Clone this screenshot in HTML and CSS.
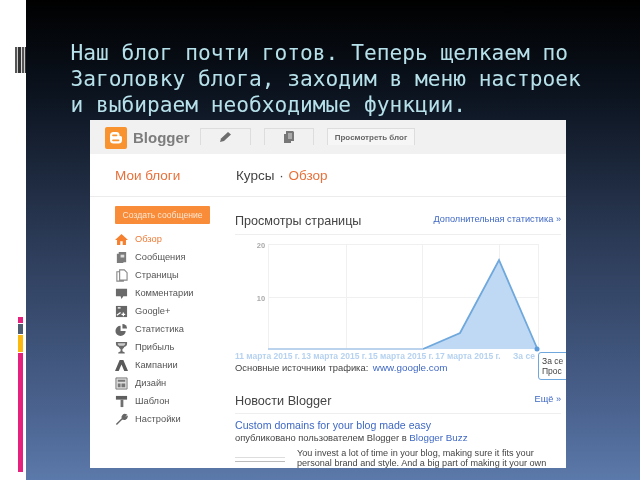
FILE: index.html
```html
<!DOCTYPE html>
<html lang="ru">
<head>
<meta charset="utf-8">
<title>Blogger</title>
<link rel="stylesheet" href="styles.css">
</head>
<body>
<div class="page">
  <aside class="strip">
    <div class="mark-grey"></div>
    <div class="marks">
      <i class="mark m1"></i><i class="mark m2"></i><i class="mark m3"></i><i class="mark m4"></i>
    </div>
  </aside>
  <main class="slide">
    <h1 class="title">Наш блог почти готов. Теперь щелкаем по<br>Заголовку блога, заходим в меню настроек<br>и выбираем необходимые функции.</h1>
    <section class="shot">
      <header class="bar">
        <svg class="logo" viewBox="0 0 22 22"><rect width="22" height="22" rx="2" fill="#f8932f"/><path d="M5 8.5a3.5 3.5 0 0 1 3.5-3.5h3a3 3 0 0 1 3 3v1h1a1.5 1.5 0 0 1 1.500 1.500v2.500a3.500 3.500 0 0 1-3.500 3.500h-5a3.500 3.500 0 0 1-3.500-3.500z" fill="#fff"/><path d="M8 8.300h3.500M8 13.300h5.500" stroke="#f8932f" stroke-width="1.800" stroke-linecap="round"/></svg>
        <span class="brand">Blogger</span>
        <span class="tab tab-a"><svg class="tab-icon" viewBox="0 0 14 14"><path d="M1 12l1-3.500 7-6.500 3 2.500-7 6.500z" fill="#6d6d6d"/></svg></span>
        <span class="tab tab-b"><svg class="tab-icon" viewBox="0 0 14 14"><path d="M4 1h7l1 1v9H9v2H2V4h2z" fill="#777"/><path d="M6 4h4M6 6h4M6 8h4" stroke="#ddd"/></svg></span>
        <span class="tab tab-c">Просмотреть блог</span>
      </header>
      <div class="crumbs">
        <span class="myblogs">Мои блоги</span>
        <span class="path">Курсы <span class="dot">·</span> <b>Обзор</b></span>
      </div>
      <div class="content">
        <nav class="side">
          <div class="create">Создать сообщение</div>
          <ul class="menu">
            <li class="active"><svg viewBox="0 0 14 14"><path d="M7 1L0 7.500h2.200V13h3.500V9h2.600v4h3.500V7.500H14z" fill="#f5802f"/></svg>Обзор</li>
            <li><svg viewBox="0 0 14 14"><path d="M4 1h8v11H9v1H2V3h2z" fill="#7b7b7b"/><path d="M6 4h4v3H6z" fill="#ddd"/></svg>Сообщения</li>
            <li><svg viewBox="0 0 14 14"><path d="M5 1h5l3 3v8H5zM5 3H2v10h7v-1" fill="none" stroke="#888" stroke-width="1.200"/></svg>Страницы</li>
            <li><svg viewBox="0 0 14 14"><path d="M1 2h12v8H9l-2 3-1-3H1z" fill="#6a6a6a"/></svg>Комментарии</li>
            <li><svg viewBox="0 0 14 14"><path d="M1 1h12v12H1z" fill="#666"/><path d="M3 3h3M9 8v4M7 10h4M2 11l4-3" stroke="#fff" stroke-width="1.300"/></svg>Google+</li>
            <li><svg viewBox="0 0 14 14"><path d="M6 3a5.500 5.500 0 1 0 5.500 5.500H6z" fill="#666"/><path d="M8 1a5 5 0 0 1 5 5H8z" fill="#666"/></svg>Статистика</li>
            <li><svg viewBox="0 0 14 14"><path d="M1 1h12v2c0 2-1.500 3-3 3.500C9.500 8 8 8.500 8 9v2l2.500 1.500v1h-7v-1L6 11V9c0-.5-1.500-1-2-2.500C2.500 6 1 5 1 3z" fill="#6a6a6a"/><path d="M3 2.500h8v.5c0 1-1 1.800-1.500 2h-5C4 4.800 3 4 3 3z" fill="#ccc"/></svg>Прибыль</li>
            <li><svg viewBox="0 0 14 14"><path d="M5 1h4l5 12h-4L7 6l-3 7H0z" fill="#5a5a5a"/></svg>Кампании</li>
            <li><svg viewBox="0 0 14 14"><path d="M1 1h12v12H1z" fill="#ddd" stroke="#777"/><path d="M3 3h8v2H3zM7 7h4v4H7zM3 7h3v4H3z" fill="#777"/></svg>Дизайн</li>
            <li><svg viewBox="0 0 14 14"><path d="M1 1h12v4H1z" fill="#5f5f5f"/><path d="M6 5h3v8H6z" fill="#6f6f6f"/></svg>Шаблон</li>
            <li><svg viewBox="0 0 14 14"><path d="M1.500 12.500L8 6M8 6a3 3 0 0 1 4-4L10 4l1 1 2-1a3 3 0 0 1-5 2z" fill="#666" stroke="#666" stroke-width="1.500"/></svg>Настройки</li>
          </ul>
        </nav>
        <div class="main">
          <div class="head head-views">
            <h2>Просмотры страницы</h2>
            <a>Дополнительная статистика »</a>
          </div>
          <div class="chart">
            <svg viewBox="0 0 330 116" width="330" height="116">
              <g stroke="#f0f0f0" fill="none">
                <path d="M33 2.500H304M33 55.500H304"/>
                <path d="M33.500 2V107M111.500 2V107M187.500 2V107M264.500 2V107M303.500 2V107"/>
              </g>
              <path d="M33 107H188L225 91 264 18 302 107Z" fill="#bfd8f3"/>
              <path d="M188 107L225 91 264 18 302 106" fill="none" stroke="#6fa8dc" stroke-width="1.800"/>
              <path d="M33 107H188" fill="none" stroke="#bcd3ee" stroke-width="2"/>
              <circle cx="302" cy="107" r="2.500" fill="#5c9bdc"/>
              <text x="26" y="6" class="tick" text-anchor="middle">20</text>
              <text x="26" y="59" class="tick" text-anchor="middle">10</text>
            </svg>
            <div class="tip">За се<br>Прос</div>
          </div>
          <div class="dates"><span>11 марта 2015 г.</span><span>13 марта 2015 г.</span><span>15 марта 2015 г.</span><span>17 марта 2015 г.</span><span class="last">За се</span></div>
          <p class="source">Основные источники трафика: <a>www.google.com</a></p>
          <div class="head head-news">
            <h2>Новости Blogger</h2>
            <a>Ещё »</a>
          </div>
          <a class="post">Custom domains for your blog made easy</a>
          <p class="byline">опубликовано пользователем Blogger в <a>Blogger Buzz</a></p>
          <div class="article">
            <div class="thumb"></div>
            <p>You invest a lot of time in your blog, making sure it fits your personal brand and style. And a big part of making it your own</p>
          </div>
        </div>
      </div>
    </section>
  </main>
</div>
</body>
</html>
```
FILE: styles.css
```css
* { box-sizing: border-box; }
html, body { margin: 0; height: 100%; overflow: hidden; }
body { background: #fff; font-family: "Liberation Sans", Arial, sans-serif; }
.page { display: flex; width: 640px; height: 480px; }
.strip { position: relative; width: 25.500px; flex: none; background: #fff; }
.mark-grey {
  position: absolute; left: 15px; top: 47px; width: 10.500px; height: 26px;
  background: repeating-linear-gradient(90deg, #555 0 2px, #ccc 2px 3px, #333 3px 6px, #ddd 6px 7px);
  filter: blur(.4px);
}
.marks { position: absolute; left: 18px; top: 317px; width: 5px; display: flex; flex-direction: column; gap: 1px; }
.mark { display: block; }
.m1 { height: 6px; background: #e5207d; }
.m2 { height: 10px; background: #4d5d72; }
.m3 { height: 17px; background: #fbb80f; }
.m4 { height: 119px; background: #e5207d; }
.slide {
  flex: 1; height: 480px; padding: 40px 0 0 45px;
  background: linear-gradient(180deg, #000 0%, #0c1420 20%, #2b3a56 50%, #4a628e 85%, #5b79aa 100%);
}
.title {
  margin: 0; width: 560px; height: 80px; white-space: nowrap;
  font: normal 21.200px/26px "DejaVu Sans Mono", monospace; color: #b7e1ea;
  filter: blur(.3px);
}
.shot {
  width: 476px; height: 348px; margin-left: 19.500px; overflow: hidden;
  background: #fff; filter: blur(.45px);
  display: flex; flex-direction: column;
}
.bar { display: flex; align-items: flex-start; height: 34px; flex: none; padding: 7px 0 0 15px; background: #f1f1f1; }
.logo { width: 22px; height: 22px; flex: none; }
.brand { width: 67px; margin-left: 6px; font-size: 15px; line-height: 21px; font-weight: bold; color: #7d7d7d; }
.tab { display: flex; align-items: center; justify-content: center; height: 17px; margin-top: 1px; border: 1px solid #ddd; border-bottom: 0; }
.tab-a { width: 51px; }
.tab-b { width: 50px; margin-left: 13px; }
.tab-c { width: 88px; margin-left: 13px; font-size: 8px; font-weight: bold; color: #666; background: #f6f6f6; }
.tab-icon { width: 14px; height: 14px; }
.crumbs { display: flex; align-items: center; height: 43px; flex: none; padding-left: 25px; border-bottom: 1px solid #ececec; }
.myblogs { width: 121px; font-size: 13.500px; color: #e8703a; }
.path { font-size: 13.500px; color: #444; }
.path b { font-weight: normal; color: #e8703a; }
.dot { margin: 0 1px; }
.content { display: flex; flex: 1; min-height: 0; }
.side { width: 145px; flex: none; padding: 9px 0 0 25px; }
.create {
  width: 95px; height: 18px; border-radius: 1px; background: #f98c38; color: #fde6d2;
  font-size: 8.600px; line-height: 18px; text-align: center;
}
.menu { list-style: none; margin: 6px 0 0; padding: 0; }
.menu li { display: flex; align-items: center; gap: 7px; height: 18px; font-size: 9.300px; color: #555; }
.menu svg { width: 13px; height: 13px; flex: none; }
.menu .active { color: #ee7b36; }
.main { width: 326px; flex: none; }
.head { display: flex; justify-content: space-between; align-items: center; border-bottom: 1px solid #eee; }
.head h2 { margin: 0; font-weight: normal; color: #444; }
.head a { margin-bottom: 4px; font-size: 9.200px; color: #3f68c4; }
.head-views { height: 26px; margin-top: 12px; padding-bottom: 2px; }
.head-views h2 { font-size: 12.600px; }
.chart { position: relative; height: 115px; margin-top: 7px; }
.chart svg { display: block; }
.tick { font: bold 7.500px "Liberation Sans", sans-serif; fill: #aaa; }
.tip {
  position: absolute; left: 303px; top: 110px; width: 40px; height: 28px; padding: 3px 0 0 3px;
  border: 1px solid #6fa8dc; border-radius: 3px; background: #fff;
  font-size: 8.500px; line-height: 10px; color: #444; white-space: nowrap;
}
.dates { display: flex; gap: 1.500px; height: 8px; margin-top: -6px; font-size: 8.500px; line-height: 10px; font-weight: bold; color: #b6d2f0; white-space: nowrap; }
.last { margin-left: 11px; }
.source { margin: 3px 0 0; font-size: 9.400px; line-height: 12px; color: #444; }
.source a { margin-left: 2px; font-size: 9.900px; color: #3f68c4; }
.head-news { height: 26px; margin-top: 14px; padding-bottom: 0; }
.head-news h2 { font-size: 12.700px; }
.post { display: block; margin-top: 4px; font-size: 10.600px; line-height: 14px; color: #3f68c4; }
.byline { margin: 0; font-size: 9.400px; line-height: 12px; color: #444; }
.byline a { color: #3f68c4; font-size: 9.800px; }
.article { display: flex; margin-top: 4px; }
.thumb { width: 62px; height: 18px; flex: none; margin-top: 6px; background: linear-gradient(#fff 0 3px, #ddd 3px 4px, #fff 4px 7px, #bbb 7px 8px, #fff 8px); background-size: 50px 100%; background-repeat: no-repeat; }
.article p { margin: 0; width: 255px; font-size: 9.100px; line-height: 10px; color: #444; }
```
